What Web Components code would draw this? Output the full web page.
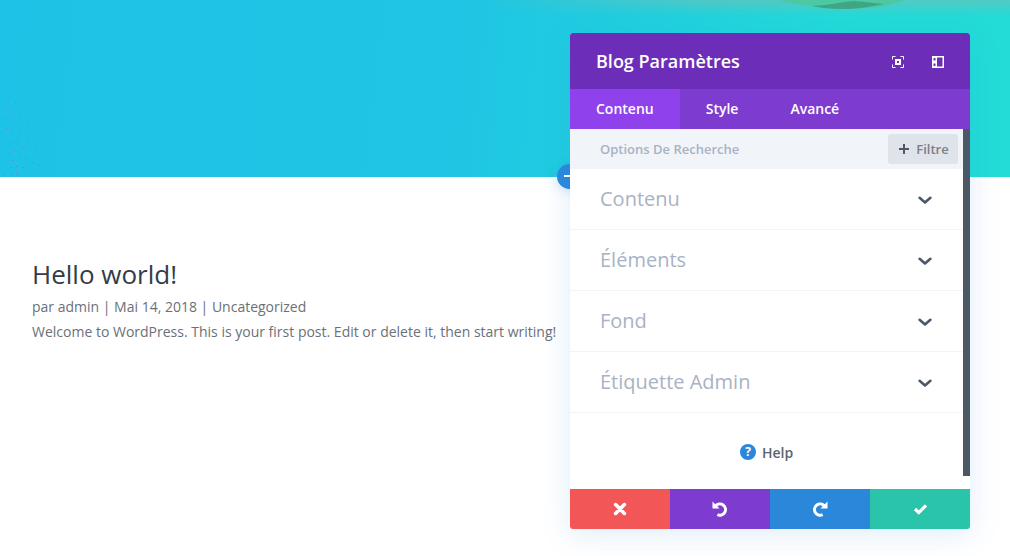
<!DOCTYPE html>
<html lang="fr">
<head>
<meta charset="utf-8">
<title>Blog Paramètres</title>
<style>
	html, body { margin: 0; padding: 0; background: #fff; }
	body { width: 1010px; height: 556px; overflow: hidden; position: relative; font-family: "Open Sans", sans-serif; }
</style>
</head>
<body>
<hero-section></hero-section>
<blog-post>
	<span slot="title">Hello world!</span>
	<span slot="meta">par admin | Mai 14, 2018 | Uncategorized</span>
	Welcome to WordPress. This is your first post. Edit or delete it, then start writing!
</blog-post>
<settings-panel title-text="Blog Paramètres">
	<panel-toggle>Contenu</panel-toggle>
	<panel-toggle>Éléments</panel-toggle>
	<panel-toggle>Fond</panel-toggle>
	<panel-toggle>Étiquette Admin</panel-toggle>
</settings-panel>

<script>
// specks of the hero's lower left corner, [x, y]
const specks = [
	[15, 102], [6, 106], [10, 114], [19, 114], [5, 119], [13, 124], [27, 125], [6, 128], [19, 131],
	[11, 134], [5, 137], [27, 140], [17, 141], [10, 143], [5, 147], [22, 148], [35, 149], [9, 153],
	[14, 150], [19, 157], [5, 158], [25, 158], [12, 160], [33, 163], [39, 165], [5, 166], [10, 167],
	[16, 166], [23, 167], [3, 175], [11, 174], [16, 174], [29, 173]
];

customElements.define('hero-section', class extends HTMLElement
{
	connectedCallback()
	{
		const shadow = this.attachShadow({ mode: 'open' });
		const dots = specks.map(([x, y]) => `<rect x="${x}" y="${y}" width="1" height="1"/>`).join('');

		shadow.innerHTML = `
			<style>
				:host {
					display: block;
					height: 177px;
					position: relative;
					overflow: hidden;
					background: linear-gradient(97deg, #1ec2e6 0%, #1fc5e4 45%, #23dad9 80%, #23dcd7 100%);
				}
				.haze {
					position: absolute;
					inset: 0 0 auto 0;
					height: 16px;
					background: linear-gradient(to bottom, rgba(115, 190, 180, .6), rgba(115, 190, 180, 0));
					-webkit-mask-image: linear-gradient(to right, transparent 480px, #000 720px);
					mask-image: linear-gradient(to right, transparent 480px, #000 720px);
				}
				svg { position: absolute; top: 0; }
				.hill { left: 770px; }
				.specks { left: 0; fill: #4d8fdc; }
			</style>
			<div class="haze"></div>
			<svg class="specks" width="60" height="177">${dots}</svg>
			<svg class="hill" width="150" height="12" viewBox="0 0 150 12">
				<path d="M9 0 C30 6 60 9 85 9 C110 8 125 4 134 0 Z" fill="#4cc8a2"/>
				<path d="M42 6 C60 5 72 2 84 1 C96 2 104 3 114 4 C100 7 86 9 72 9 C60 9 50 8 42 6 Z" fill="#3fa585"/>
			</svg>
		`;
	}
});

customElements.define('blog-post', class extends HTMLElement
{
	connectedCallback()
	{
		const shadow = this.attachShadow({ mode: 'open' });

		shadow.innerHTML = `
			<style>
				:host {
					display: block;
					padding: 79px 0 0 32px;
					font-family: "Open Sans", sans-serif;
					font-size: 14px;
					line-height: 24px;
					color: #6b7078;
				}
				h2 {
					margin: 0 0 3px;
					font-size: 26px;
					font-weight: 400;
					line-height: 36px;
					color: #333c48;
				}
				.meta { display: block; margin-bottom: 1px; }
			</style>
			<h2><slot name="title"></slot></h2>
			<span class="meta"><slot name="meta"></slot></span>
			<slot></slot>
		`;
	}
});

customElements.define('panel-toggle', class extends HTMLElement
{
	connectedCallback()
	{
		const shadow = this.attachShadow({ mode: 'open' });

		shadow.innerHTML = `
			<style>
				:host {
					display: flex;
					align-items: center;
					justify-content: space-between;
					box-sizing: border-box;
					height: 61px;
					padding: 0 31px 2px 30px;
					border-bottom: 1px solid #f1f4f9;
					font-size: 20px;
					color: #a9b2c4;
				}
				svg { display: block; margin-top: 5px; }
			</style>
			<slot></slot>
			<svg width="14" height="9" viewBox="0 0 14 9">
				<path d="M1.6 1.8 L7 6.4 L12.4 1.8" fill="none" stroke="#4c5866" stroke-width="2.6" stroke-linecap="round" stroke-linejoin="round"/>
			</svg>
		`;
	}
});

customElements.define('settings-panel', class extends HTMLElement
{
	connectedCallback()
	{
		const shadow = this.attachShadow({ mode: 'open' });

		shadow.innerHTML = `
			<style>
				:host {
					display: flex;
					flex-direction: column;
					position: absolute;
					left: 570px;
					top: 33px;
					width: 400px;
					height: 496px;
					border-radius: 3px;
					background: #fff;
					box-shadow: 0 5px 30px rgba(43, 135, 218, .15);
					font-family: "Open Sans", sans-serif;
				}
				.add {
					position: absolute;
					left: -13px;
					top: 131px;
					width: 25px;
					height: 25px;
					border-radius: 50%;
					background: #2b87da;
					box-shadow: 0 2px 12px rgba(43, 135, 218, .25);
				}
				.add::after {
					content: "";
					position: absolute;
					left: 7px;
					top: 11px;
					width: 12px;
					height: 2px;
					background: #fff;
				}
				header {
					position: relative;
					display: flex;
					align-items: center;
					justify-content: space-between;
					height: 56px;
					padding: 0 26px;
					border-radius: 3px 3px 0 0;
					background: #6c2eb9;
					color: #fff;
					font-size: 18px;
					font-weight: 600;
				}
				.tools { display: flex; gap: 28px; margin-top: 1px; }
				.tools svg { display: block; }
				nav {
					position: relative;
					display: flex;
					height: 40px;
					background: #7d3bcf;
					color: #fff;
					font-size: 14px;
					font-weight: 600;
					line-height: 40px;
				}
				nav span { padding: 0 26px; }
				nav .active { background: #8f42ec; }
				.body {
					position: relative;
					display: flex;
					flex-direction: column;
					flex: 1;
					min-height: 0;
					background: #fff;
				}
				.search {
					display: flex;
					align-items: center;
					justify-content: space-between;
					height: 40px;
					margin-right: 7px;
					padding: 0 5px 0 30px;
					background: #f1f5f9;
					font-size: 13px;
					font-weight: 600;
					color: #a9b2c4;
				}
				.filter {
					display: flex;
					align-items: center;
					justify-content: center;
					box-sizing: border-box;
					gap: 7px;
					width: 70px;
					height: 30px;
					padding-left: 2px;
					border-radius: 3px;
					background: #dfe3ea;
					font-weight: 600;
					color: #7b7f87;
				}
				.help {
					display: flex;
					align-items: center;
					justify-content: center;
					gap: 6px;
					flex: 1;
					padding-right: 7px;
					padding-top: 2px;
					font-size: 14px;
					font-weight: 600;
					color: #5a6572;
				}
				.help svg { display: block; }
				.scroll {
					position: absolute;
					right: 0;
					top: 0;
					width: 7px;
					height: 347px;
					background: #4c5866;
				}
				footer {
					display: grid;
					grid-template-columns: repeat(4, 1fr);
					height: 40px;
					border-radius: 0 0 3px 3px;
					overflow: hidden;
				}
				footer div { display: flex; align-items: center; justify-content: center; }
				::slotted(panel-toggle) { margin-right: 7px; }
			</style>
			<div class="add"></div>
			<header>
				<span>${this.getAttribute('title-text')}</span>
				<div class="tools">
					<svg width="12" height="12" viewBox="0 0 12 12" fill="none" stroke="#fff" stroke-width="1">
						<path d="M.5 3.5V.5H3.5M8.5 .5h3V3.5M11.5 8.5v3H8.5M3.5 11.5H.5V8.5"/>
						<rect x="4" y="4" width="4" height="4" stroke-width="2"/>
					</svg>
					<svg width="12" height="12" viewBox="0 0 12 12">
						<path fill="#fff" fill-rule="evenodd" d="M0 0H12V12H0ZM5 1.5V10.5H10.5V1.5ZM1.5 2V4.5H3.5V2ZM1.5 7.5V10H3.5V7.5Z"/>
					</svg>
				</div>
			</header>
			<nav>
				<span class="active">Contenu</span>
				<span>Style</span>
				<span>Avancé</span>
			</nav>
			<div class="body">
				<div class="search">
					<span>Options De Recherche</span>
					<div class="filter">
						<svg width="10" height="10" viewBox="0 0 10 10"><path d="M5 0V10M0 5H10" stroke="#4c5866" stroke-width="2"/></svg>
						<span>Filtre</span>
					</div>
				</div>
				<slot></slot>
				<div class="help">
					<svg width="16" height="16" viewBox="0 0 16 16">
						<circle cx="8" cy="8" r="8" fill="#2b87da"/>
						<text x="8" y="12.2" text-anchor="middle" font-family="Open Sans, sans-serif" font-size="12" font-weight="700" fill="#fff">?</text>
					</svg>
					<span>Help</span>
				</div>
				<div class="scroll"></div>
			</div>
			<footer>
				<div style="background:#f25656">
					<svg width="14" height="14" viewBox="0 0 14 14"><path d="M2.6 2.6 L11.4 11.4 M11.4 2.6 L2.6 11.4" stroke="#fff" stroke-width="3.6" stroke-linecap="round"/></svg>
				</div>
				<div style="background:#7e3bcf">
					<svg width="16" height="16" viewBox="0 0 16 16" fill="none">
						<path d="M3.6 5 A5.6 5.6 0 1 1 5.4 13.6" stroke="#fff" stroke-width="3"/>
						<path d="M0.5 0.5 V7.5 H7.5 Z" fill="#fff"/>
					</svg>
				</div>
				<div style="background:#2b87da">
					<svg width="16" height="16" viewBox="0 0 16 16" fill="none">
						<path d="M12.4 5 A5.6 5.6 0 1 0 10.6 13.6" stroke="#fff" stroke-width="3"/>
						<path d="M15.5 0.5 V7.5 H8.5 Z" fill="#fff"/>
					</svg>
				</div>
				<div style="background:#29c4a9">
					<svg width="15" height="12" viewBox="0 0 15 12"><path d="M2 6 L5.8 9.6 L13 2.4" fill="none" stroke="#fff" stroke-width="3.2" stroke-linejoin="miter"/></svg>
				</div>
			</footer>
		`;
	}
});
</script>
</body>
</html>
